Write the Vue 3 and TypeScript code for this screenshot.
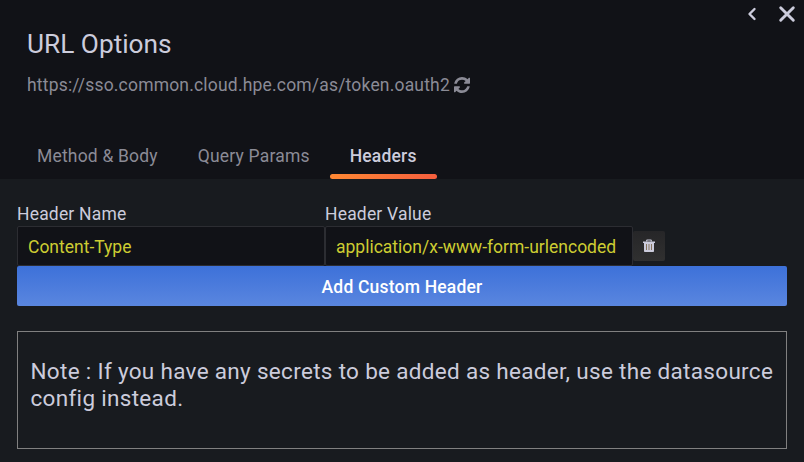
<script setup lang="ts">
import { ref } from 'vue'

interface HeaderRow {
  name: string
  value: string
}

const tabs: string[] = ['Method & Body', 'Query Params', 'Headers']
const active = ref<string>('Headers')
const rows = ref<HeaderRow[]>([
  { name: 'Content-Type', value: 'application/x-www-form-urlencoded' },
])

function addRow(): void {
  rows.value.push({ name: '', value: '' })
}

function removeRow(index: number): void {
  rows.value.splice(index, 1)
}
</script>

<template>
  <div class="drawer">
    <header class="head">
      <div class="actions">
        <svg class="chevron" viewBox="0 0 12 16" aria-hidden="true">
          <path d="M8.500 3 3.500 8l5 5" />
        </svg>
        <svg class="close" viewBox="0 0 18 18" aria-hidden="true">
          <path d="M2.700 2.700l12.600 12.600M15.300 2.700l-12.600 12.600" />
        </svg>
      </div>
      <h3 class="title">URL Options</h3>
      <div class="subtitle">
        <span class="url">https://sso.common.cloud.hpe.com/as/token.oauth2</span>
        <svg class="sync" viewBox="0 0 1536 1536" aria-hidden="true">
          <path d="M1511 928q0 5-1 7-64 268-268 434.500T764 1536q-146 0-282.500-55T238 1324l-129 129q-19 19-45 19t-45-19-19-45V960q0-26 19-45t45-19h448q26 0 45 19t19 45-19 45l-137 137q71 66 161 102t187 36q134 0 250-65t186-179q11-17 53-117 8-23 30-23h192q13 0 22.500 9.500t9.500 22.500zM1536 128v448q0 26-19 45t-45 19h-448q-26 0-45-19t-19-45 19-45l138-138Q969 256 768 256q-134 0-250 65T332 500q-11 17-53 117-8 23-30 23H50q-13 0-22.500-9.500T18 608v-7q65-268 270-434.500T768 0q146 0 284 55.500T1297 212l130-129q19-19 45-19t45 19 19 45z" />
        </svg>
      </div>
      <nav class="tabs">
        <button
          v-for="tab in tabs"
          :key="tab"
          type="button"
          class="tab"
          :class="{ active: tab === active }"
          @click="active = tab"
        >{{ tab }}</button>
      </nav>
    </header>

    <main class="content">
      <div class="labels">
        <span>Header Name</span>
        <span>Header Value</span>
      </div>
      <div v-for="(row, i) in rows" :key="i" class="row">
        <input v-model="row.name" class="field" type="text" spellcheck="false" />
        <input v-model="row.value" class="field" type="text" spellcheck="false" />
        <button type="button" class="trash" @click="removeRow(i)">
          <svg viewBox="0 0 12 14" aria-hidden="true">
            <path class="handle" d="M3.700 2.500V1.600q0-.6.6-.6h3.400q.6 0 .6.6v.9" />
            <path class="can" d="M0 2.500h12v1.400H11V12.200q0 .8-.8.8H1.800q-.8 0-.8-.8V3.900H0z" />
            <path class="slots" d="M3.500 5v6M6 5v6M8.500 5v6" />
          </svg>
        </button>
      </div>
      <button type="button" class="add" @click="addRow">Add Custom Header</button>
      <div class="note">Note : If you have any secrets to be added as header, use the datasource config instead.</div>
    </main>
  </div>
</template>

<style>
body {
  background: #181b1f;
}
</style>

<style scoped>
.drawer {
  box-sizing: border-box;
  width: 804px;
  height: 462px;
  overflow: hidden;
  background: #181b1f;
  color: #ccccdc;
  font-family: Roboto, "Liberation Sans", sans-serif;
  font-size: 17.5px;
  letter-spacing: 0.1875px;
}
.head {
  box-sizing: border-box;
  height: 179px;
  background: #111217;
  display: flex;
  flex-direction: column;
}
.actions {
  display: flex;
  justify-content: flex-end;
  align-items: center;
  gap: 20px;
  height: 28px;
  padding-right: 8px;
}
.actions svg {
  fill: none;
  stroke: #ccccdc;
  stroke-width: 2.400;
  stroke-linecap: round;
  stroke-linejoin: round;
}
.chevron {
  width: 12px;
  height: 16px;
}
.actions .close {
  width: 18px;
  height: 18px;
  stroke-width: 2.900;
}
.title {
  margin: 0;
  padding-left: 27px;
  font-size: 26.25px;
  font-weight: 400;
  line-height: 32px;
  letter-spacing: 0;
}
.subtitle {
  display: flex;
  align-items: center;
  gap: 4px;
  margin-top: 12px;
  padding-left: 27px;
  height: 26px;
  color: #8b8b96;
}
.sync {
  width: 16px;
  height: 16px;
  fill: #8b8b96;
}
.tabs {
  display: flex;
  margin-top: auto;
  padding-left: 17px;
}
.tab {
  height: 46px;
  margin: 0;
  padding: 0 20px;
  border: 0;
  background: none;
  color: #8b8b96;
  font: 400 17.5px/46px Roboto, "Liberation Sans", sans-serif;
  letter-spacing: inherit;
  position: relative;
}
.tab.active {
  color: #ccccdc;
  font-weight: 500;
}
.tab.active::before {
  content: "";
  position: absolute;
  left: 0;
  right: 0;
  bottom: 0;
  height: 5px;
  border-radius: 2.500px;
  background: linear-gradient(90deg, #ff8833, #f55f3e);
}
.content {
  padding: 23px 17px 0;
}
.labels {
  display: grid;
  grid-template-columns: 308px 308px;
  line-height: 24px;
}
.row {
  display: flex;
  align-items: center;
  height: 40px;
}
.field {
  box-sizing: border-box;
  width: 308px;
  height: 40px;
  margin: 0;
  padding: 1px 10px 0;
  border: 1px solid #2c2d32;
  border-radius: 2px;
  outline: 0;
  background: #111217;
  color: #cdcd32;
  font: 400 17.5px Roboto, "Liberation Sans", sans-serif;
}
.trash {
  display: flex;
  align-items: center;
  justify-content: center;
  width: 32px;
  height: 30px;
  padding: 0;
  border: 0;
  border-radius: 2px;
  background: linear-gradient(#262628, #303030);
}
.trash svg {
  width: 12px;
  height: 14px;
}
.handle {
  fill: none;
  stroke: #ccccdc;
  stroke-width: 1.200;
}
.can {
  fill: #ccccdc;
}
.slots {
  fill: none;
  stroke: #86755f;
  stroke-width: 1;
}
.add {
  display: block;
  width: 100%;
  height: 40px;
  margin: 0;
  padding: 2px 0 0;
  border: 0;
  border-radius: 2px;
  background: linear-gradient(#3d71d9, #5a86df);
  color: #fff;
  font: 500 17.5px/38px Roboto, "Liberation Sans", sans-serif;
  letter-spacing: inherit;
}
.note {
  box-sizing: border-box;
  height: 118px;
  margin-top: 25px;
  padding: 26px 12px 0 12.5px;
  border: 1px solid #808080;
  font-size: 22.5px;
  line-height: 27px;
  letter-spacing: 0.3125px;
}
</style>
